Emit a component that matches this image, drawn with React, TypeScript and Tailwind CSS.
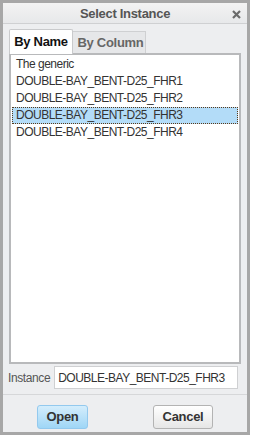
import { useState } from "react";

const instances = [
  "The generic",
  "DOUBLE-BAY_BENT-D25_FHR1",
  "DOUBLE-BAY_BENT-D25_FHR2",
  "DOUBLE-BAY_BENT-D25_FHR3",
  "DOUBLE-BAY_BENT-D25_FHR4",
];

export default function App() {
  const [selected, setSelected] = useState(3);
  const [tab, setTab] = useState("name");

  return (
    <div
      className="w-[256px] h-[436px] bg-white"
      style={{ fontFamily: "'Liberation Sans', Arial, sans-serif" }}
    >
      <div className="w-[250px] h-[435px] border-[3px] border-[#a7a7a7] bg-[#edeef0] flex flex-col">
        {/* title bar */}
        <div className="h-[21px] shrink-0 flex items-center justify-center relative pt-[2px] bg-gradient-to-b from-[#f3f3f3] to-[#e7e8ea] border-b border-[#cfd0d2]">
          <span className="text-[13px] font-bold text-[#555] tracking-[-0.3px]">Select Instance</span>
          <svg
            className="absolute right-[6px] top-[7px]"
            width="9"
            height="9"
            viewBox="0 0 9 9"
          >
            <path d="M1 1L8 8M8 1L1 8" stroke="#6b6b6b" strokeWidth="2.2" />
          </svg>
        </div>

        {/* tabs */}
        <div className="flex items-end pl-[6px] pt-[5px] h-[29px] shrink-0">
          <button
            type="button"
            onClick={() => setTab("name")}
            className={`w-[64px] text-[13px] font-bold border border-b-0 rounded-t-[2px] tracking-[-0.3px] ${
              tab === "name"
                ? "bg-white border-[#c9cacc] text-[#111] relative z-10 -mb-[1px] h-[25px]"
                : "bg-[#e6e7e9] border-[#cfd0d2] text-[#666] h-[22px]"
            }`}
          >
            By Name
          </button>
          <button
            type="button"
            onClick={() => setTab("column")}
            className={`w-[73px] text-[13px] font-bold border border-b-0 border-l-0 tracking-[-0.3px] pl-[3px] ${
              tab === "column"
                ? "bg-white border-[#c9cacc] text-[#111] relative z-10 -mb-[1px] h-[25px]"
                : "bg-[#e6e7e9] border-[#cfd0d2] text-[#666] h-[22px]"
            }`}
          >
            By Column
          </button>
        </div>

        {/* list */}
        <div className="mx-[6px] h-[311px] shrink-0 bg-white border-2 border-[#b8b9bb] pt-[1px] px-[1px]">
          {instances.map((name, i) => (
            <div
              key={name}
              onClick={() => setSelected(i)}
              className={`h-[17px] leading-[15px] pl-[3px] text-[12px] text-[#333] tracking-[-0.5px] whitespace-nowrap cursor-default border ${
                i === selected
                  ? "bg-[#b3dcf8] border-dotted border-[#5a3a1a]"
                  : "border-transparent"
              }`}
            >
              {name}
            </div>
          ))}
        </div>

        {/* instance field */}
        <div className="flex items-center h-[25px] mt-[1px] pl-[5px] pr-[9px] gap-[4px]">
          <span className="text-[12px] text-[#555] tracking-[-0.4px]">Instance</span>
          <div className="flex-1 h-[23px] bg-white border border-[#cfd0d2] flex items-center pl-[3px] text-[12px] text-[#333] tracking-[-0.5px] whitespace-nowrap overflow-hidden">
            DOUBLE-BAY_BENT-D25_FHR3
          </div>
        </div>

        <div className="mt-[4px] border-t border-[#d6d7d9]" />

        {/* buttons */}
        <div className="flex items-start pt-[10px]">
          <button
            type="button"
            className="ml-[34px] w-[51px] h-[24px] rounded-[3px] border border-[#93c9ee] bg-gradient-to-b from-[#d4edfc] to-[#9fd6f6] text-[13px] font-bold text-[#333] tracking-[-0.3px]"
          >
            Open
          </button>
          <button
            type="button"
            className="ml-[65px] w-[60px] h-[24px] rounded-[3px] border border-[#b3b3b3] bg-gradient-to-b from-[#ffffff] to-[#e6e6e6] text-[13px] font-bold text-[#333] tracking-[-0.3px]"
          >
            Cancel
          </button>
        </div>
      </div>
    </div>
  );
}
